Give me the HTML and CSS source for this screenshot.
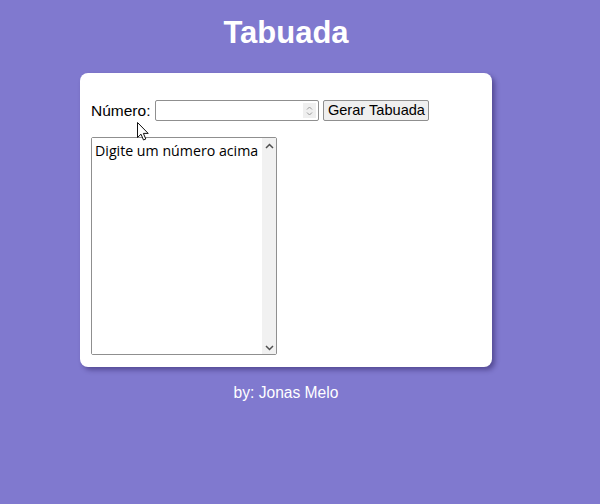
FILE: index.html
```html
<!DOCTYPE html>
<html lang="pt-BR">
<head>
<meta charset="utf-8">
<title>Tabuada</title>
<link rel="stylesheet" href="styles.css">
</head>
<body>
<div class="page">
  <h1 class="title">Tabuada</h1>
  <section class="card">
    <div class="row">
      <label class="label" for="num">Número:</label>
      <div class="numbox">
        <input class="numinput" id="num" type="text">
        <span class="spin">
          <svg width="7" height="12" viewBox="0 0 7 12"><path d="M1 4.5 L3.5 2 L6 4.5 M1 7.5 L3.5 10 L6 7.5" fill="none" stroke="#9a9a9a" stroke-width="1"/></svg>
        </span>
      </div>
      <button class="btn" type="button">Gerar Tabuada</button>
    </div>
    <div class="areabox">
      <textarea class="area" readonly>Digite um número acima</textarea>
      <div class="sbar">
        <svg width="9" height="6" viewBox="0 0 9 6"><path d="M1 5 L4.5 1.5 L8 5" fill="none" stroke="#505050" stroke-width="1.5"/></svg>
        <svg width="9" height="6" viewBox="0 0 9 6"><path d="M1 1 L4.5 4.5 L8 1" fill="none" stroke="#505050" stroke-width="1.5"/></svg>
      </div>
    </div>
  </section>
  <p class="footer">by: Jonas Melo</p>
  <svg class="cursor" width="13" height="20" viewBox="0 0 13 20"><path d="M0.5 0.5 L0.5 15.5 L4 12.2 L6.5 18 L8.8 17 L6.4 11.4 L11.2 11.4 Z" fill="#fff" stroke="#111" stroke-width="1" stroke-linejoin="round"/></svg>
</div>
</body>
</html>
```
FILE: styles.css
```css
html, body {
  margin: 0;
  padding: 0;
}
body {
  background: #8079cf;
  font-family: "Liberation Sans", Arial, sans-serif;
  width: 600px;
  height: 504px;
  overflow: hidden;
}
.page {
  width: 572px;
  position: relative;
  display: flex;
  flex-direction: column;
  align-items: center;
}
.title {
  margin: 15px 0 0;
  font-size: 31px;
  font-weight: bold;
  color: #fff;
  line-height: 36px;
}
.card {
  margin-top: 22px;
  width: 412px;
  height: 294px;
  box-sizing: border-box;
  background: #fff;
  border-radius: 8px;
  box-shadow: 3px 3px 5px rgba(30, 20, 80, 0.45);
  padding: 27px 11px 12px;
  display: flex;
  flex-direction: column;
  gap: 16px;
}
.row {
  display: flex;
  align-items: center;
  height: 21px;
}
.label {
  font-size: 15.5px;
  color: #000;
  margin-right: 5px;
}
.numbox {
  width: 164px;
  height: 21px;
  box-sizing: border-box;
  border: 1px solid #8f8f8f;
  border-radius: 2px;
  display: flex;
  align-items: center;
  background: #fff;
}
.numinput {
  flex: 1;
  min-width: 0;
  border: none;
  outline: none;
  height: 17px;
  padding: 0 2px;
  font-size: 14px;
  font-family: "Liberation Sans", Arial, sans-serif;
}
.spin {
  width: 13px;
  height: 15px;
  margin-right: 2px;
  background: #efefef;
  display: flex;
  align-items: center;
  justify-content: center;
}
.btn {
  margin-left: 4px;
  width: 106px;
  height: 21px;
  box-sizing: border-box;
  padding: 0;
  border: 1px solid #8f8f8f;
  border-radius: 2px;
  background: #efefef;
  color: #000;
  font-size: 14.6px;
  font-family: "Liberation Sans", Arial, sans-serif;
  line-height: 19px;
}
.areabox {
  width: 186px;
  height: 218px;
  box-sizing: border-box;
  border: 1px solid #8f8f8f;
  border-radius: 2px;
  display: flex;
  background: #fff;
}
.area {
  flex: 1;
  min-width: 0;
  border: none;
  outline: none;
  resize: none;
  overflow: hidden;
  padding: 3px 0 0 3px;
  margin: 0;
  font-family: "Open Sans", "Liberation Sans", sans-serif;
  font-size: 14.2px;
  line-height: 19px;
  color: #000;
  background: #fff;
}
.sbar {
  width: 14px;
  background: #f1f1f1;
  display: flex;
  flex-direction: column;
  justify-content: space-between;
  align-items: center;
  padding: 5px 0 3px;
}
.footer {
  margin: 17px 0 0;
  font-size: 15.6px;
  color: #fff;
  line-height: 18px;
}
.cursor {
  position: absolute;
  left: 137px;
  top: 122px;
}
```
